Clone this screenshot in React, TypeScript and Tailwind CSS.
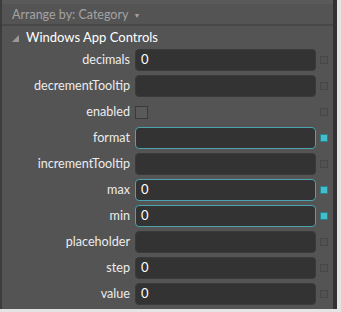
import React from "react";

type Row = {
  label: string;
  kind: "text" | "check";
  value?: string;
  active?: boolean;
};

const rows: Row[] = [
  { label: "decimals", kind: "text", value: "0" },
  { label: "decrementTooltip", kind: "text" },
  { label: "enabled", kind: "check" },
  { label: "format", kind: "text", active: true },
  { label: "incrementTooltip", kind: "text" },
  { label: "max", kind: "text", value: "0", active: true },
  { label: "min", kind: "text", value: "0", active: true },
  { label: "placeholder", kind: "text" },
  { label: "step", kind: "text", value: "0" },
  { label: "value", kind: "text", value: "0" },
];

const PropertyRow = ({ row }: { row: Row }) => {
  return (
    <div className="flex items-center h-[26px]">
      <div className="w-[133px] text-right text-[12.6px] text-[#ececec] pr-[5px] leading-none">
        {row.label}
      </div>
      {row.kind === "check" ? (
        <div className="w-[181px] flex items-center">
          <div className="w-[13px] h-[13px] border border-[#3a3a3a] bg-[#5a5a5a]"></div>
        </div>
      ) : (
        <div
          className={
            row.active
              ? "w-[181px] h-[22px] rounded-[4px] bg-[#333333] border border-[#4aa3ad] flex items-center px-[5px] text-[13px] text-white"
              : "w-[181px] h-[22px] rounded-[4px] bg-[#333333] border border-[#3a3a3a] flex items-center px-[5px] text-[13px] text-white"
          }
        >
          {row.value}
        </div>
      )}
      <div className="ml-[4px]">
        {row.active ? (
          <div className="w-[8px] h-[8px] bg-[#3fc0cc] border border-[#2b7f88]"></div>
        ) : (
          <div className="w-[8px] h-[8px] border border-[#474747] bg-[#525252]"></div>
        )}
      </div>
    </div>
  );
};

export default function App() {
  return (
    <div
      className="w-[341px] h-[312px] bg-[#e4e4e4] overflow-hidden"
      style={{ fontFamily: 'Lato, "Open Sans", sans-serif' }}
    >
      <div className="w-[337px] h-[309px] bg-[#545454] border-l-[2px] border-l-[#3c3c3c] border-r-[4px] border-r-[#323232] flex flex-col">
        <div className="h-[4px] bg-[#5a5a5a]"></div>
        <div className="h-[22px] border-b-[2px] border-b-[#484848] flex items-center pl-[10px] pt-[3px] text-[12.5px] text-[#a3a3a3]">
          Arrange by: Category
          <span className="ml-[5px] text-[7px] text-[#a3a3a3]">▼</span>
        </div>
        <div className="h-[21px] flex items-center pl-[10px] pt-[3px] text-[13px] text-white">
          <svg width="7" height="7" viewBox="0 0 7 7" className="mr-[7px]">
            <polygon points="7,0 7,7 0,7" fill="#9a9a9a" />
          </svg>
          Windows App Controls
        </div>
        <div className="flex flex-col">
          {rows.map((r) => (
            <PropertyRow key={r.label} row={r} />
          ))}
        </div>
      </div>
    </div>
  );
}
